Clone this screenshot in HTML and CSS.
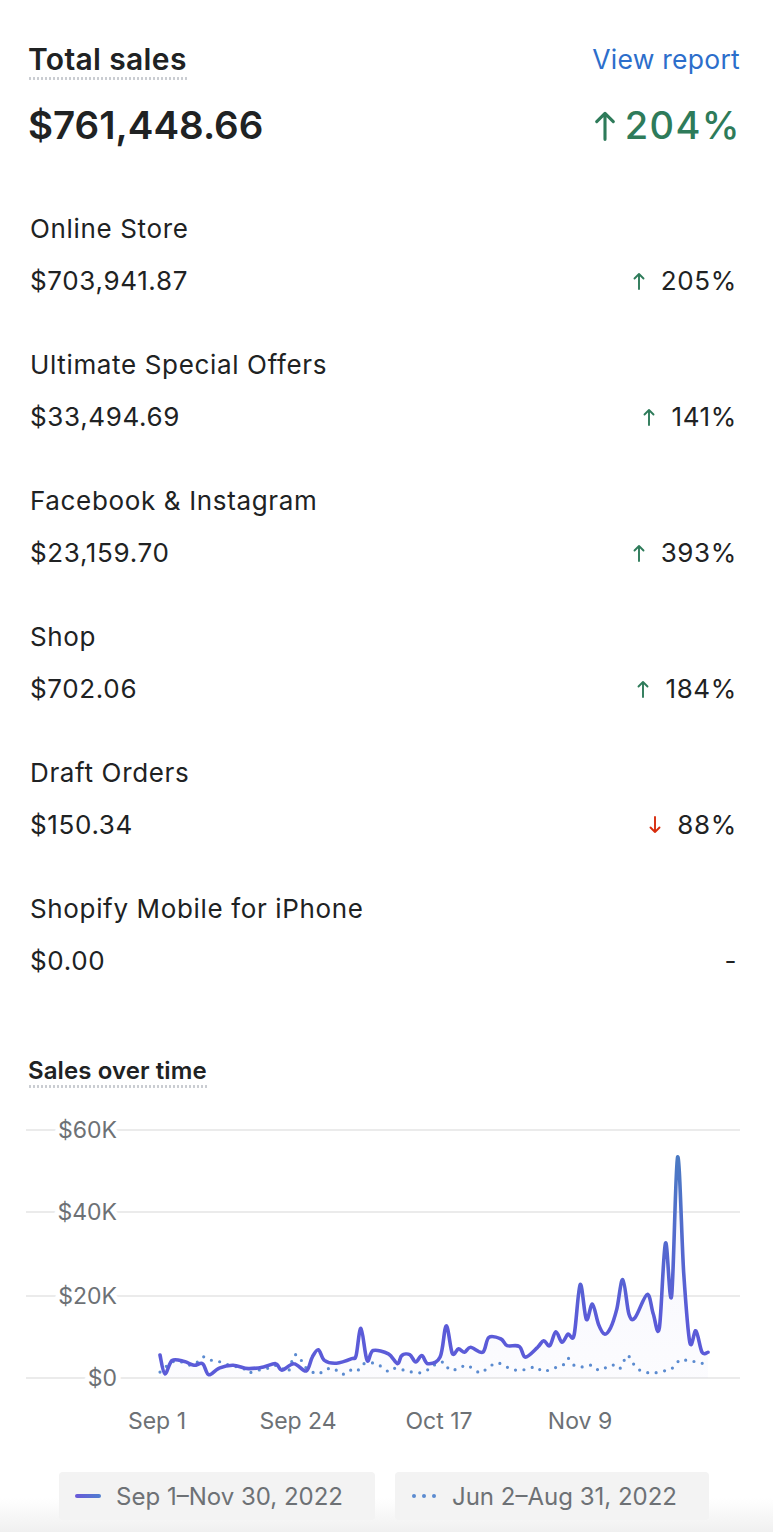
FILE: index.html
```html
<!DOCTYPE html>
<html lang="en">
<head>
<meta charset="utf-8">
<title>Total sales</title>
<link rel="stylesheet" href="styles.css">
</head>
<body>
<div class="card">
  <div class="head">
    <span class="title dotted">Total sales</span>
    <a class="link" href="#">View report</a>
  </div>
  <div class="total-row">
    <span class="total">$761,448.66</span>
    <span class="big-change"><svg class="big-arrow" viewBox="0 0 20 28" aria-hidden="true"><path d="M10 26.5V3M2.5 10.5L10 3l7.5 7.5"/></svg>204%</span>
  </div>

  <ul class="channels">
    <li>
      <div class="ch-name">Online Store</div>
      <div class="ch-row"><span>$703,941.87</span><span class="pct"><svg class="arrow up" viewBox="0 0 12 18" aria-hidden="true"><path d="M6 17V2M1.5 6.5L6 2l4.5 4.5"/></svg>205%</span></div>
    </li>
    <li>
      <div class="ch-name">Ultimate Special Offers</div>
      <div class="ch-row"><span>$33,494.69</span><span class="pct"><svg class="arrow up" viewBox="0 0 12 18" aria-hidden="true"><path d="M6 17V2M1.5 6.5L6 2l4.5 4.5"/></svg>141%</span></div>
    </li>
    <li>
      <div class="ch-name">Facebook &amp; Instagram</div>
      <div class="ch-row"><span>$23,159.70</span><span class="pct"><svg class="arrow up" viewBox="0 0 12 18" aria-hidden="true"><path d="M6 17V2M1.5 6.5L6 2l4.5 4.5"/></svg>393%</span></div>
    </li>
    <li>
      <div class="ch-name">Shop</div>
      <div class="ch-row"><span>$702.06</span><span class="pct"><svg class="arrow up" viewBox="0 0 12 18" aria-hidden="true"><path d="M6 17V2M1.5 6.5L6 2l4.5 4.5"/></svg>184%</span></div>
    </li>
    <li>
      <div class="ch-name">Draft Orders</div>
      <div class="ch-row"><span>$150.34</span><span class="pct"><svg class="arrow down" viewBox="0 0 12 18" aria-hidden="true"><path d="M6 1V16M1.5 11.5L6 16l4.5-4.5"/></svg>88%</span></div>
    </li>
    <li>
      <div class="ch-name">Shopify Mobile for iPhone</div>
      <div class="ch-row"><span>$0.00</span><span class="pct">-</span></div>
    </li>
  </ul>

  <section class="chart-sec">
    <span class="sub dotted">Sales over time</span>
    <svg class="chart" width="715" height="345" viewBox="25 1100 715 345">
      <defs>
        <linearGradient id="lineGrad" gradientUnits="userSpaceOnUse" x1="0" y1="1150" x2="0" y2="1320">
          <stop offset="0" stop-color="#4a7bc2"/>
          <stop offset="1" stop-color="#5b5bd8"/>
        </linearGradient>
        <linearGradient id="fillGrad" gradientUnits="userSpaceOnUse" x1="0" y1="1150" x2="0" y2="1378">
          <stop offset="0" stop-color="#5b5bd8" stop-opacity="0.06"/>
          <stop offset="1" stop-color="#5b5bd8" stop-opacity="0.02"/>
        </linearGradient>
      </defs>
      <g class="grid">
        <line x1="26" y1="1130" x2="740" y2="1130"/>
        <line x1="26" y1="1212" x2="740" y2="1212"/>
        <line x1="26" y1="1296" x2="740" y2="1296"/>
        <line x1="26" y1="1378" x2="740" y2="1378"/>
      </g>
      <g class="ylabels">
        <text x="117" y="1130">$60K</text>
        <text x="117" y="1212">$40K</text>
        <text x="117" y="1296">$20K</text>
        <text x="117" y="1378">$0</text>
      </g>
      <path id="main-fill" class="main-fill" d=""/>
      <path id="comp-line" class="comp-line" d=""/>
      <path id="main-line" class="main-line" d=""/>
      <g class="xlabels">
        <text x="157" y="1421">Sep 1</text>
        <text x="298" y="1421">Sep 24</text>
        <text x="439" y="1421">Oct 17</text>
        <text x="580" y="1421">Nov 9</text>
      </g>
    </svg>
  </section>

  <div class="legend">
    <div class="leg-item"><span class="sw-line"></span>Sep 1–Nov 30, 2022</div>
    <div class="leg-item"><span class="sw-dots"><i></i><i></i><i></i></span>Jun 2–Aug 31, 2022</div>
  </div>
</div>
<script src="script.js"></script>
</body>
</html>
```

FILE: styles.css
```css
* { box-sizing: border-box; }

html {
  height: 1532px;
  background: linear-gradient(to bottom, #ffffff 0, #ffffff 1498px, #f0f0f0 1532px);
}

body {
  margin: 0;
  font-family: Inter, "Noto Sans", "Liberation Sans", sans-serif;
  color: #202223;
}

.card {
  padding: 42px 33px 0 28px;
}

.head {
  display: flex;
  justify-content: space-between;
  align-items: flex-start;
}

.title {
  font-size: 30px;
  font-weight: 600;
  line-height: 34px;
  letter-spacing: 0.35px;
}

.dotted {
  display: inline-block;
  padding-bottom: 4px;
  background-image: radial-gradient(circle, #c9ccd1 1.1px, transparent 1.5px);
  background-size: 4px 3px;
  background-repeat: repeat-x;
  background-position: 0 100%;
}

.title.dotted { padding-bottom: 4px; }

.link {
  font-size: 26.5px;
  line-height: 34px;
  letter-spacing: 0.25px;
  color: #2c6ecb;
  text-decoration: none;
}

.total-row {
  display: flex;
  justify-content: space-between;
  align-items: center;
  margin-top: 23px;
  height: 44px;
}

.total {
  font-size: 38.5px;
  font-weight: 600;
  letter-spacing: 0;
}

.big-change {
  display: flex;
  align-items: center;
  gap: 8px;
  font-size: 38px;
  font-weight: 500;
  color: #2e7b5a;
  letter-spacing: 1.4px;
  margin-right: -1px;
}

.big-arrow {
  width: 24px;
  height: 31px;
  fill: none;
  stroke: #2e7b5a;
  stroke-width: 2.8;
  stroke-linecap: round;
  stroke-linejoin: round;
}

.channels {
  list-style: none;
  margin: 64px 0 0 0;
  padding: 0 3px 0 2px;
  display: flex;
  flex-direction: column;
  gap: 48px;
}

.ch-name,
.ch-row {
  font-size: 26px;
  line-height: 36px;
  letter-spacing: 0.65px;
}

.ch-row {
  margin-top: 16px;
  display: flex;
  justify-content: space-between;
  align-items: center;
}

.pct {
  display: flex;
  align-items: center;
  gap: 16px;
}

.arrow {
  width: 12px;
  height: 18px;
  fill: none;
  stroke-width: 1.9;
  stroke-linecap: round;
  stroke-linejoin: round;
}

.arrow.up { stroke: #2e7b5a; }
.arrow.down { stroke: #d72c0d; }

.chart-sec {
  margin-top: 78px;
}

.sub {
  font-size: 24px;
  font-weight: 600;
  line-height: 28px;
  letter-spacing: 0.1px;
  padding-bottom: 3px;
}

.chart {
  display: block;
  margin: 12px 0 0 -3px;
  overflow: visible;
}

.grid line {
  stroke: #ebebeb;
  stroke-width: 2;
}

.ylabels text {
  font-family: Inter, "Noto Sans", sans-serif;
  font-size: 23px;
  fill: #6d7175;
  text-anchor: end;
  dominant-baseline: central;
  stroke: #ffffff;
  stroke-width: 10px;
  paint-order: stroke;
  stroke-linejoin: round;
}

.xlabels text {
  font-family: Inter, "Noto Sans", sans-serif;
  font-size: 23px;
  fill: #6d7175;
  text-anchor: middle;
  dominant-baseline: central;
}

.main-fill {
  fill: url(#fillGrad);
  stroke: none;
}

.main-line {
  fill: none;
  stroke: url(#lineGrad);
  stroke-width: 3.6;
  stroke-linecap: round;
  stroke-linejoin: round;
}

.comp-line {
  fill: none;
  stroke: #5b8bd0;
  stroke-width: 3.2;
  stroke-linecap: round;
  stroke-dasharray: 0 8.5;
}

.legend {
  display: flex;
  justify-content: center;
  gap: 20px;
  margin: 27px 0 0 0;
}

.leg-item {
  display: flex;
  align-items: center;
  height: 48px;
  padding: 0 32px 0 16px;
  background: #f3f3f3;
  border-radius: 4px;
  font-size: 24px;
  color: #6d7175;
  gap: 15px;
}

.sw-line {
  width: 26px;
  height: 4px;
  border-radius: 2px;
  background: linear-gradient(to right, #6a58d8, #4f7fd0);
}

.sw-dots {
  display: flex;
  gap: 6px;
  width: 26px;
  justify-content: center;
}

.sw-dots i {
  width: 4px;
  height: 4px;
  border-radius: 50%;
  background: #5b8bd0;
}
```

FILE: script.js
```js
(function () {
  var X = function (d) { return 160 + d * 6.09; };
  var Y = function (v) { return 1378 - v * 4.1; };

  var main = [
    [0, 5.6], [0.8, 1.0], [2, 4.3], [4, 4.0], [5.6, 3.1], [7, 3.5], [8, 0.8],
    [9.7, 2.4], [12, 3.1], [14.5, 2.3], [17, 2.7], [19, 3.5], [20, 1.9], [22, 3.5],
    [24, 1.7], [25, 5.1], [26, 6.9], [27, 4.3], [29, 3.6], [31.5, 4.7], [32.2, 5.5],
    [33, 12.1], [34, 4.3], [35, 6.7], [37.5, 5.9], [39, 3.5], [39.7, 5.5], [41, 5.7],
    [42, 3.9], [43, 5.5], [44, 3.5], [46, 5.1], [47, 12.7], [48, 6.0], [49, 7.1],
    [50, 6.3], [51, 7.5], [53, 6.3], [54, 9.9], [56, 9.5], [57, 7.9], [59, 7.7],
    [60, 5.1], [62, 7.5], [63, 9.1], [64, 7.9], [65, 11.3], [66, 8.7], [67, 10.7],
    [68, 10.5], [69, 22.8], [70, 14.3], [71, 18.0], [72, 13.1], [73, 10.7], [74, 12.3],
    [75, 16.8], [76, 24.0], [77, 15.6], [78, 14.7], [80, 20.4], [81, 15.6], [82, 12.3],
    [83, 32.9], [84, 20.0], [85, 53.9], [86, 25.6], [87, 8.7], [88, 11.5], [89, 6.3], [90, 6.3]
  ];

  var comp = [
    [0, 1.45], [2, 3.9], [3.6, 3.9], [5.2, 3.1], [6.5, 4.3], [7.3, 5.2], [8.5, 4.3],
    [9.7, 4.0], [11.3, 3.2], [13.7, 2.3], [14.5, 1.3], [16.1, 1.9], [17.8, 2.4],
    [19.4, 3.1], [21, 1.5], [22, 5.5], [23, 4.8], [23.8, 2.7], [25.8, 1.0], [27, 1.9],
    [28.4, 2.4], [29.9, 0.9], [31.1, 1.9], [32.3, 1.6], [33.5, 3.5], [35.5, 3.5],
    [37.5, 1.6], [38.7, 2.4], [40.8, 1.6], [42.8, 1.3], [44.4, 2.4], [45.6, 3.7],
    [46.8, 3.7], [47.6, 1.9], [49.2, 2.4], [50.4, 3.1], [52.5, 1.3], [53.7, 2.3],
    [55.3, 3.7], [56.9, 2.7], [58.5, 1.9], [60.1, 2.1], [61.7, 2.7], [62.9, 1.6],
    [64.6, 2.4], [66.2, 3.2], [67, 4.8], [68, 3.1], [69.4, 2.7], [70.9, 3.1],
    [72.2, 1.9], [74.2, 3.2], [75.5, 2.3], [76.7, 5.5], [77.6, 3.7], [78.8, 1.9],
    [80.7, 1.2], [82.7, 1.7], [84.1, 2.4], [85.5, 4.5], [87, 4.0], [88.1, 4.0], [89.4, 3.4]
  ];

  function toPts(arr) {
    return arr.map(function (p) { return [X(p[0]), Y(p[1])]; });
  }

  function smooth(p) {
    var s = 'M' + p[0][0].toFixed(1) + ' ' + p[0][1].toFixed(1);
    for (var i = 0; i < p.length - 1; i++) {
      var p0 = p[i - 1] || p[i], p1 = p[i], p2 = p[i + 1], p3 = p[i + 2] || p2;
      var c1x = p1[0] + (p2[0] - p0[0]) / 6, c1y = p1[1] + (p2[1] - p0[1]) / 6;
      var c2x = p2[0] - (p3[0] - p1[0]) / 6, c2y = p2[1] - (p3[1] - p1[1]) / 6;
      s += ' C' + c1x.toFixed(1) + ' ' + c1y.toFixed(1) + ' ' +
        c2x.toFixed(1) + ' ' + c2y.toFixed(1) + ' ' +
        p2[0].toFixed(1) + ' ' + p2[1].toFixed(1);
    }
    return s;
  }

  var mp = toPts(main);
  var md = smooth(mp);
  document.getElementById('main-line').setAttribute('d', md);
  var last = mp[mp.length - 1];
  document.getElementById('main-fill').setAttribute('d',
    md + ' L' + last[0].toFixed(1) + ' 1378 L' + mp[0][0].toFixed(1) + ' 1378 Z');
  document.getElementById('comp-line').setAttribute('d', smooth(toPts(comp)));
})();
```
